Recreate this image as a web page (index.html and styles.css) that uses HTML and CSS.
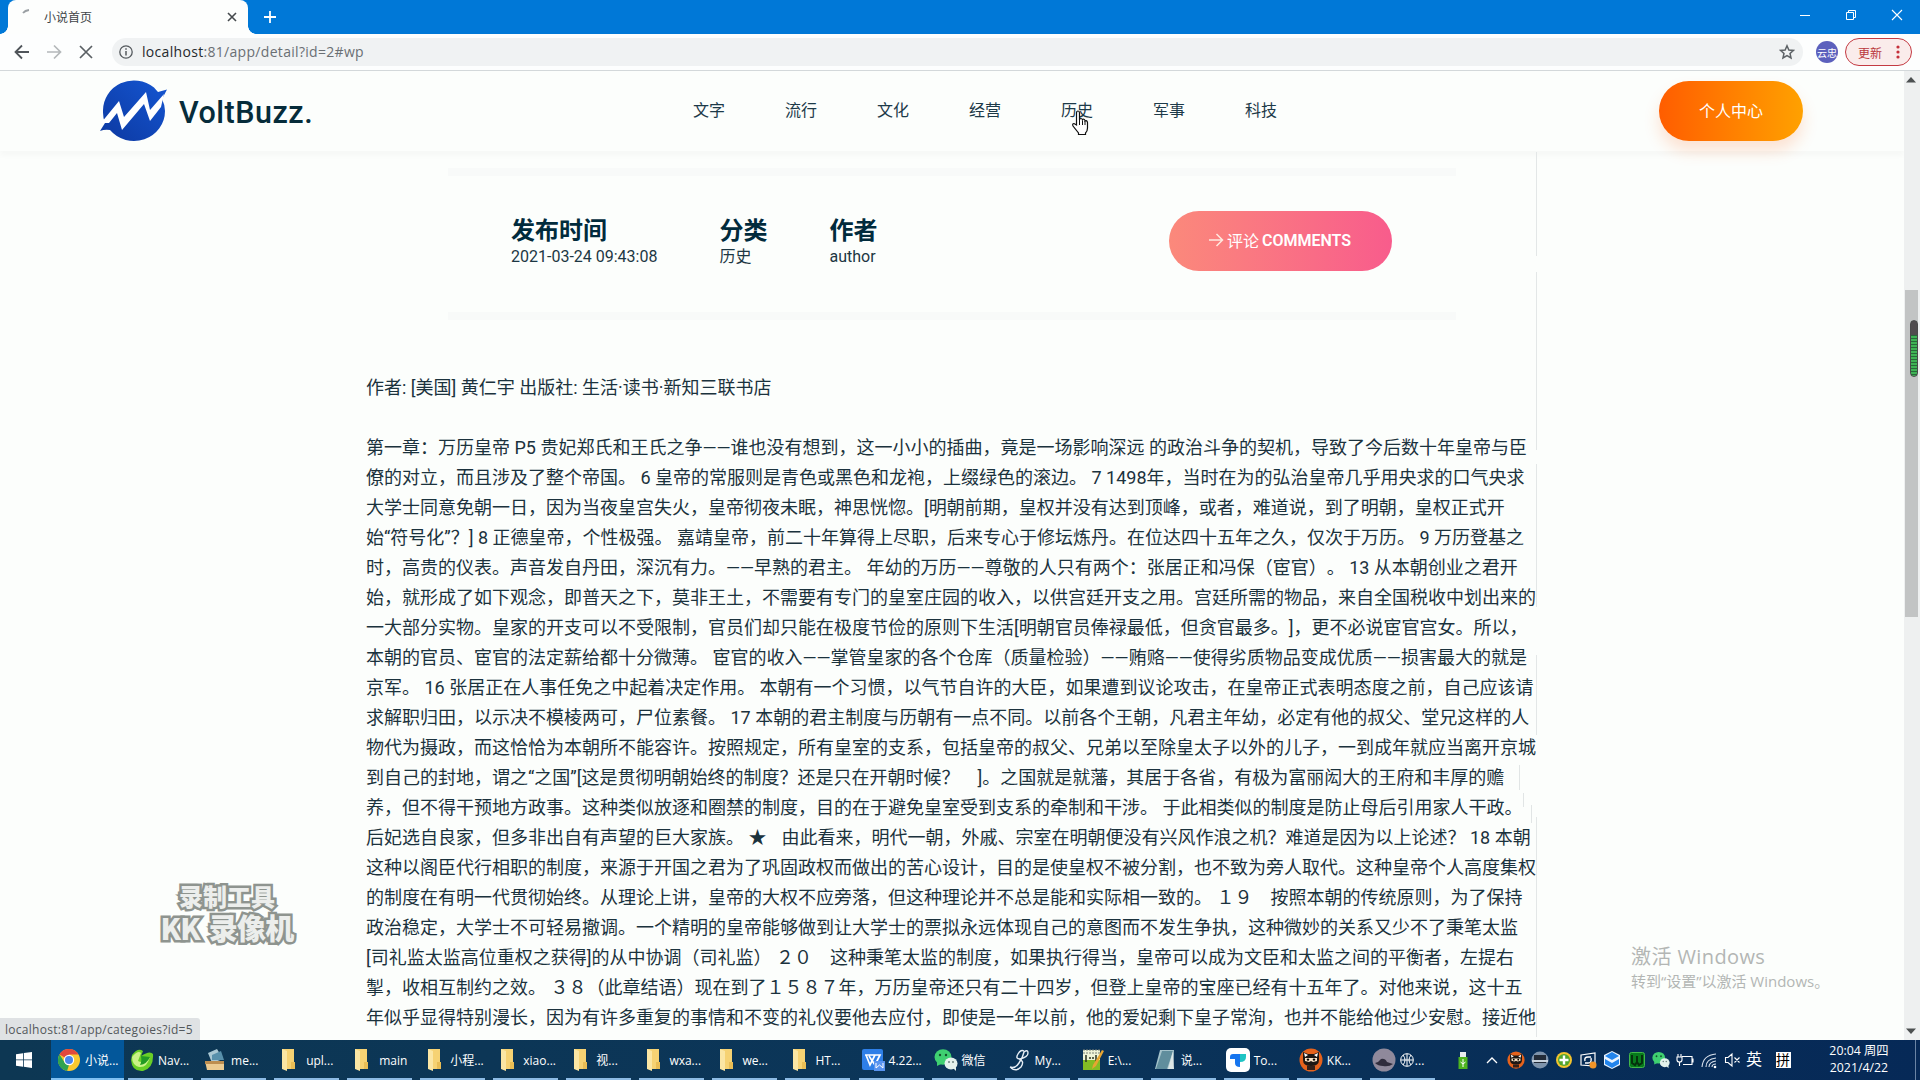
FILE: index.html
```html
<!DOCTYPE html>
<html lang="zh-CN">
<head>
<meta charset="utf-8">
<title>小说首页</title>
<link rel="stylesheet" href="styles.css">
</head>
<body>
<svg class="defs" aria-hidden="true">
  <symbol id="folder" viewBox="0 0 24 24"><path d="M6 1h12v20H6z" fill="#f6d273"/><path d="M6 1l5 2v20l-5-2z" fill="#fbe6a4"/><path d="M15 14h4v7h-4z" fill="#e9bd55"/></symbol>
  <symbol id="wechat" viewBox="0 0 24 24"><ellipse cx="9" cy="9" rx="8.5" ry="7.8" fill="#3fd071"/><path d="M3 14l0 4 4-2z" fill="#3fd071"/><circle cx="6" cy="7" r="1.2" fill="#14502c"/><circle cx="12" cy="7" r="1.2" fill="#14502c"/><ellipse cx="17" cy="15.5" rx="6.5" ry="6" fill="#e4f2ec"/><path d="M19 20l3 3 0-4z" fill="#e4f2ec"/><circle cx="15" cy="14" r="1" fill="#6f8580"/><circle cx="19" cy="14" r="1" fill="#6f8580"/></symbol>
  <symbol id="ninja" viewBox="0 0 24 24"><circle cx="12" cy="12" r="11.5" fill="#e5621c"/><path d="M4 4l5 2h6l5-2 0 8q0 6-8 6t-8-6z" fill="#1d1714"/><path d="M5 5l4 2-3 2zM19 5l-4 2 3 2z" fill="#fff"/><path d="M6 10h12v3l-4 1-2-1-2 1-4-1z" fill="#fbe3c6"/><circle cx="9" cy="11.6" r="1.2"/><circle cx="15" cy="11.6" r="1.2"/><path d="M8 18h8v4H8z" fill="#32201a"/></symbol>
</svg>

<header class="tabstrip">
  <div class="tab">
    <svg class="spinner" width="16" height="16" viewBox="0 0 16 16"><path d="M3 6Q5 3.500 9 3" fill="none" stroke="#9a9fa3" stroke-width="1.8"/></svg>
    <span class="tab-title">小说首页</span>
    <svg width="10" height="10" viewBox="0 0 10 10"><path d="M1 1l8 8M9 1L1 9" stroke="#45494d" stroke-width="1.6"/></svg>
  </div>
  <svg class="newtab" width="14" height="14" viewBox="0 0 14 14"><path d="M7 1v12M1 7h12" stroke="#fff" stroke-width="1.8"/></svg>
  <div class="wincontrols">
    <svg width="12" height="12" viewBox="0 0 12 12"><path d="M1 6.5h10" stroke="#fff"/></svg>
    <svg width="12" height="12" viewBox="0 0 12 12"><path d="M1.5 3.5h7v7h-7zM3.5 3.500v-2h7v7h-2" fill="none" stroke="#fff"/></svg>
    <svg width="12" height="12" viewBox="0 0 12 12"><path d="M1 1l10 10M11 1L1 11" stroke="#fff" stroke-width="1.1"/></svg>
  </div>
</header>

<div class="toolbar">
  <svg width="16" height="16" viewBox="0 0 16 16"><path d="M15 8H2M8 1.500L1.500 8l6.500 6.500" fill="none" stroke="#50555a" stroke-width="1.8"/></svg>
  <svg width="16" height="16" viewBox="0 0 16 16"><path d="M1 8h13M8 1.500L14.500 8 8 14.500" fill="none" stroke="#b4b8ba" stroke-width="1.7"/></svg>
  <svg width="16" height="16" viewBox="0 0 16 16"><path d="M2 2l12 12M14 2L2 14" stroke="#5b6064" stroke-width="1.7"/></svg>
  <div class="urlbar">
    <svg width="14" height="14" viewBox="0 0 14 14"><circle cx="7" cy="7" r="6.200" fill="none" stroke="#54595d" stroke-width="1.3"/><path d="M7 6v4.500M7 3.300v1.500" stroke="#54595d" stroke-width="1.500"/></svg>
    <span class="url"><b>localhost</b>:81/app/detail?id=2#wp</span>
    <svg class="star" width="16" height="16" viewBox="0 0 18 18"><path d="M9 2l2.100 4.700 5.100.5-3.800 3.400 1.100 5L9 13l-4.500 2.600 1.100-5L1.800 7.200l5.100-.5z" fill="none" stroke="#5d6266" stroke-width="1.700"/></svg>
  </div>
  <span class="avatar">云忠</span>
  <span class="update">更新<svg width="4" height="14" viewBox="0 0 4 14"><circle cx="2" cy="2" r="1.600"/><circle cx="2" cy="7" r="1.600"/><circle cx="2" cy="12" r="1.600"/></svg></span>
</div>

<div class="viewport">
  <main class="page">
    <div class="site-header">
      <div class="brand">
        <svg width="68" height="62" viewBox="0 0 68 62"><defs><linearGradient id="lg" x1="0" y1="1" x2="1" y2="0"><stop offset="0" stop-color="#0c38a0"/><stop offset="1" stop-color="#1556d2"/></linearGradient></defs>
          <path d="M0 51L5 43A31 30 0 0 1 3 31A31 30 0 0 1 54 7.500Q57 11 58 12L67 9.500 62 19Q65 25 65 31A31 30 0 0 1 10 50Q5 49 0 51z" fill="url(#lg)"/>
          <path d="M1 43L19 21 24 37 46 12 50 30 64 14 61 27 50 41 44 24 22 50 17 33 9 43z" fill="#fff"/></svg>
        <span>VoltBuzz.</span>
      </div>
      <nav class="menu"><a>文字</a><a>流行</a><a>文化</a><a>经营</a><a>历史</a><a>军事</a><a>科技</a></nav>
      <a class="profile">个人中心</a>
    </div>
    <section class="info">
      <dl><dt>发布时间</dt><dd>2021-03-24 09:43:08</dd></dl>
      <dl><dt>分类</dt><dd>历史</dd></dl>
      <dl><dt>作者</dt><dd>author</dd></dl>
      <a class="comments"><svg width="16" height="16" viewBox="0 0 16 16"><path d="M1 8h13M8.500 2l6 6-6 6" fill="none" stroke="#ffe9df" stroke-width="1.500"/></svg>评论 <b>COMMENTS</b></a>
    </section>
    <article class="story">
      <p>作者: [美国] 黄仁宇 出版社: 生活·读书·新知三联书店</p>
      <p>第一章：万历皇帝 P5 贵妃郑氏和王氏之争——谁也没有想到，这一小小的插曲，竟是一场影响深远 的政治斗争的契机，导致了今后数十年皇帝与臣<br>
僚的对立，而且涉及了整个帝国。 6 皇帝的常服则是青色或黑色和龙袍，上缀绿色的滚边。 7 1498年，当时在为的弘治皇帝几乎用央求的口气央求<br>
大学士同意免朝一日，因为当夜皇宫失火，皇帝彻夜未眠，神思恍惚。[明朝前期，皇权并没有达到顶峰，或者，难道说，到了明朝，皇权正式开<br>
始“符号化”？] 8 正德皇帝，个性极强。 嘉靖皇帝，前二十年算得上尽职，后来专心于修坛炼丹。在位达四十五年之久，仅次于万历。 9 万历登基之<br>
时，高贵的仪表。声音发自丹田，深沉有力。——早熟的君主。 年幼的万历——尊敬的人只有两个：张居正和冯保（宦官）。 13 从本朝创业之君开<br>
始，就形成了如下观念，即普天之下，莫非王土，不需要有专门的皇室庄园的收入，以供宫廷开支之用。宫廷所需的物品，来自全国税收中划出来的<br>
一大部分实物。皇家的开支可以不受限制，官员们却只能在极度节俭的原则下生活[明朝官员俸禄最低，但贪官最多。]，更不必说宦官宫女。所以，<br>
本朝的官员、宦官的法定薪给都十分微薄。 宦官的收入——掌管皇家的各个仓库（质量检验）——贿赂——使得劣质物品变成优质——损害最大的就是<br>
京军。 16 张居正在人事任免之中起着决定作用。 本朝有一个习惯，以气节自许的大臣，如果遭到议论攻击，在皇帝正式表明态度之前，自己应该请<br>
求解职归田，以示决不模棱两可，尸位素餐。 17 本朝的君主制度与历朝有一点不同。以前各个王朝，凡君主年幼，必定有他的叔父、堂兄这样的人<br>
物代为摄政，而这恰恰为本朝所不能容许。按照规定，所有皇室的支系，包括皇帝的叔父、兄弟以至除皇太子以外的儿子，一到成年就应当离开京城<br>
到自己的封地，谓之“之国”[这是贯彻明朝始终的制度？还是只在开朝时候？　]。之国就是就藩，其居于各省，有极为富丽闳大的王府和丰厚的赡<br>
养，但不得干预地方政事。这种类似放逐和圈禁的制度，目的在于避免皇室受到支系的牵制和干涉。 于此相类似的制度是防止母后引用家人干政。<br>
后妃选自良家，但多非出自有声望的巨大家族。 <span class="mark">★</span>　由此看来，明代一朝，外戚、宗室在明朝便没有兴风作浪之机？难道是因为以上论述？ 18 本朝<br>
这种以阁臣代行相职的制度，来源于开国之君为了巩固政权而做出的苦心设计，目的是使皇权不被分割，也不致为旁人取代。这种皇帝个人高度集权<br>
的制度在有明一代贯彻始终。从理论上讲，皇帝的大权不应旁落，但这种理论并不总是能和实际相一致的。 １９　按照本朝的传统原则，为了保持<br>
政治稳定，大学士不可轻易撤调。一个精明的皇帝能够做到让大学士的票拟永远体现自己的意图而不发生争执，这种微妙的关系又少不了秉笔太监<br>
[司礼监太监高位重权之获得]的从中协调（司礼监） ２０　这种秉笔太监的制度，如果执行得当，皇帝可以成为文臣和太监之间的平衡者，左提右<br>
掣，收相互制约之效。 ３８（此章结语）现在到了１５８７年，万历皇帝还只有二十四岁，但登上皇帝的宝座已经有十五年了。对他来说，这十五<br>
年似乎显得特别漫长，因为有许多重复的事情和不变的礼仪要他去应付，即使是一年以前，他的爱妃剩下皇子常洵，也并不能给他过少安慰。接近他</p>
      <p class="next">的人都可以看出，皇帝的情绪在这些年里变得越来越消沉，他对朝廷中的各种争论感到厌倦，而大臣们仍然不断地向他呈递奏章，要求他遵守祖宗</p>
    </article>
  </main>
  <aside class="scrollbar">
    <svg width="10" height="6" viewBox="0 0 10 6"><path d="M0 5.500L5 0l5 5.500z" fill="#4c5051"/></svg>
    <div class="thumb"></div>
    <svg width="10" height="6" viewBox="0 0 10 6"><path d="M0 .5L5 6 10 .5z" fill="#4c5051"/></svg>
  </aside>
  <div class="meter"></div>
  <svg class="edge" width="24" height="890" viewBox="0 0 24 890"><path d="M20.500 1v104M20.500 121v178M20.500 313v143M20.500 504v80M20.500 666v220" stroke="#e3e7e7"/><path d="M3.500 614v25M7.500 642v14M15.500 654v18" stroke="#e1e5e5"/></svg>
  <div class="recorder"><span>录制工具</span><span>KK 录像机</span></div>
  <div class="activate"><span>激活 Windows</span><small>转到“设置”以激活 Windows。</small></div>
  <div class="status">localhost:81/app/categoies?id=5</div>
  <svg class="cursor" width="18" height="26" viewBox="0 0 18 26"><path d="M5.500 15V3Q5.500 1 7 1T8.500 3v7Q8.500 8.500 10 8.500T11.500 10.500V9.500Q13 8.500 14 10.500V11Q16 10 16.500 12.500V18Q16.500 21 14.500 23V24.500H7.500V23L2 16Q1 13.500 3 13.500z" fill="#fff" stroke="#111" stroke-width="1.200"/><path d="M8.500 10v5M11.500 10.500v4.500M14 11v4" stroke="#111"/></svg>
</div>

<footer class="taskbar">
  <svg class="start" width="16" height="16" viewBox="0 0 16 16"><path d="M0 2.300L7 1.200v6.300H0zM7.800 1.100L16 0v7.500H7.800zM0 8.300h7v6.400L0 13.700zM7.800 8.300H16V16l-8.200-1.200z" fill="#fff"/></svg>
  <div class="apps">
    <a class="app active"><svg viewBox="0 0 24 24"><circle cx="12" cy="12" r="11" fill="#fbc92f"/><path d="M12 12L2.500 6.500A11 11 0 0 1 21.600 6.600H12z" fill="#e2483d"/><path d="M2.500 6.500L8 15l4 2-2 6A11 11 0 0 1 2.500 6.500z" fill="#2fa351"/><circle cx="12" cy="12" r="5.200" fill="#fff"/><circle cx="12" cy="12" r="4" fill="#4a86ec"/></svg>小说...</a>
    <a class="app"><svg viewBox="0 0 24 24"><path d="M2 7Q8-1 13 3L11 8Q20 2 23 6 24 20 13 23 2 24 1 12z" fill="#69cf27"/><path d="M2 9Q8 2 11 5L8 13Q14 16 20 9 17 20 9 19 2 17 2 9z" fill="#c9f386"/><path d="M11 8q1 6-1 9 7-1 10-8z" fill="#219a24"/></svg>Nav...</a>
    <a class="app"><svg viewBox="0 0 24 24"><path d="M5 5l9-4 6 10-11 4z" fill="#a9c7d3"/><path d="M9 7l9-4 3 9H9z" fill="#5890ab"/><path d="M2 13h19v9H4z" fill="#eccb91"/><path d="M2 13h19v3H2z" fill="#bd8e50"/></svg>me...</a>
    <a class="app"><svg><use href="#folder"/></svg><span>upl...</span></a>
    <a class="app"><svg><use href="#folder"/></svg><span>main</span></a>
    <a class="app"><svg><use href="#folder"/></svg>小程...</a>
    <a class="app"><svg><use href="#folder"/></svg>xiao...</a>
    <a class="app"><svg><use href="#folder"/></svg>视...</a>
    <a class="app"><svg><use href="#folder"/></svg>wxa...</a>
    <a class="app"><svg><use href="#folder"/></svg>we...</a>
    <a class="app"><svg><use href="#folder"/></svg>HT...</a>
    <a class="app"><svg viewBox="0 0 24 24"><rect x="1" y="1" width="21" height="21" rx="2" fill="#2e7fe8"/><path d="M4 7h15L14 17 8 8M5 7l4 10 5-10" fill="none" stroke="#fff" stroke-width="1.700"/><path d="M13 13h11v10H13z" fill="#5893ef"/><path d="M15 15v5l3.500-3 3.500 3v-5" fill="none" stroke="#fff"/></svg>4.22...</a>
    <a class="app"><svg><use href="#wechat"/></svg>微信</a>
    <a class="app"><svg viewBox="0 0 24 24"><path d="M3 19Q8 21 12 15T17 4Q21 1 21 5T13 11Q8 11 11 6 14 1 17 3M12 11Q18 13 14 19 9 24 4 20" fill="none" stroke="#e5edf5" stroke-width="1.400"/></svg>My...</a>
    <a class="app"><svg viewBox="0 0 24 24"><path d="M3 2h17v20H3z" fill="#eef3d7"/><path d="M3 12h17v10H3z" fill="#83bd24"/><path d="M3 2h17M3 5h17" stroke="#7a8178" stroke-dasharray="2 1"/><path d="M6 7v7M9 10h2M12 10h2M16 7v7" stroke="#2a3321" stroke-width="1.500"/><path d="M22 2l-9 15-1 4 4-3L24 3z" fill="#e6a531"/></svg>E:\...</a>
    <a class="app"><svg viewBox="0 0 24 24"><path d="M7 2h14l-1 19H2z" fill="#a4c3cb"/><path d="M9 3h11l-6 18H3z" fill="#608e9d"/><path d="M20 3l1 18-6 0z" fill="#dce6e6"/></svg>说...</a>
    <a class="app"><svg viewBox="0 0 24 24"><rect width="24" height="24" rx="5" fill="#fff"/><path d="M4 9q0-3 3-3h7v5H4zM9 11h5v8q-5 0-5-4z" fill="#1675ef"/><path d="M14 6h6v3q0 5-6 5z" fill="#1fc4c4"/></svg>To...</a>
    <a class="app"><svg><use href="#ninja"/></svg>KK...</a>
    <a class="app"><svg viewBox="0 0 24 24"><circle cx="12" cy="12" r="11.500" fill="#8f899b"/><path d="M3 15q4-1 6-4 4-1 6 3l6 2q-4 3-10 2-5 0-8-3z" fill="#302d3d"/></svg><svg class="ball" viewBox="0 0 14 14"><path d="M7 .7A6.300 6.300 0 1 0 7 13.300 6.300 6.300 0 0 0 7 .7M7 1v12M1 7h12M3 2q4 5 0 10M11 2q-4 5 0 10" fill="none" stroke="#fff"/></svg>...</a>
  </div>
  <div class="tray">
    <svg viewBox="0 0 18 18"><path d="M6 1h6v5H6z" fill="#e7ecef"/><path d="M4.500 6h9v12h-9z" fill="#4db51f"/><path d="M9 8v8M6.500 11l2.500 2 2.500-2" fill="none" stroke="#fff"/></svg>
    <svg class="chev" viewBox="0 0 18 18"><path d="M4 12l5-5 5 5" fill="none" stroke="#fff" stroke-width="1.300"/></svg>
    <svg><use href="#ninja"/></svg>
    <svg viewBox="0 0 18 18"><circle cx="9" cy="9" r="8.500" fill="#7d93ac"/><path d="M3 4h12v8H3z" fill="#222b38"/><path d="M1 9h16v2H1z" fill="#c9d3de"/></svg>
    <svg viewBox="0 0 18 18"><circle cx="9" cy="9" r="8" fill="#f3c42e"/><circle cx="9" cy="9" r="6" fill="#53a42c"/><path d="M9 4.500v9M4.500 9h9" stroke="#fff" stroke-width="2.400"/></svg>
    <svg viewBox="0 0 18 18"><path d="M2 4l14-2v13l-14-1z" fill="none" stroke="#fff" stroke-width="1.200"/><path d="M6 10q-1-4 3-4h3M12 7q1 5-3 5H6" fill="none" stroke="#fff" stroke-width="1.400"/><circle cx="14" cy="14" r="3.500" fill="#f19428"/></svg>
    <svg viewBox="0 0 18 18"><path d="M9 0l8 4v10l-8 4-8-4V4z" fill="#eaf4ff"/><path d="M9 1l7 4-7 4-7-4zM2 8l7 4 7-4v5l-7 4-7-4z" fill="#2284ec"/></svg>
    <svg viewBox="0 0 18 18"><rect x="1.500" y="1.500" width="15" height="15" rx="2" fill="#087a1c" stroke="#43b64a"/><path d="M4 4v8l3 2 2-3 2 3 3-2V4M9 5v6" fill="none" stroke="#05300c" stroke-width="2"/></svg>
    <svg><use href="#wechat"/></svg>
    <svg viewBox="0 0 18 18"><path d="M6 5.500h10v8H7M16 8h1v3h-1M1 6h5v3q0 2-2.500 2T1 9zM2 6V3M5 6V3M3.500 11v4" fill="none" stroke="#fff" stroke-width="1.100"/></svg>
    <svg viewBox="0 0 18 18"><path d="M2 16Q3 4 16 3M6 16Q6 8 16 7M9 16Q9 11 16 10M12 16q0-3 4-3" fill="none" stroke="#d8e1ec" stroke-width="1.100"/><circle cx="15" cy="16" r="1.300" fill="#fff"/></svg>
    <svg viewBox="0 0 18 18"><path d="M1.500 6.500h2.500L8 3v12l-4-3.500H1.500zM10.500 6.500l5 5M15.500 6.500l-5 5" fill="none" stroke="#fff" stroke-width="1.100"/></svg>
  </div>
  <span class="lang">英</span><span class="ime">拼</span>
  <div class="clock">20:04 周四<br>2021/4/22</div>
  <div class="peek"></div>
</footer>
</body>
</html>
```
FILE: styles.css
```css
* { box-sizing: border-box; }
body {
  margin: 0; width: 1920px; height: 1080px; overflow: hidden;
  display: flex; flex-direction: column;
  background: #fcfefc; color: #0b2532;
  font-family: Roboto, "Noto Sans CJK SC", sans-serif;
  text-spacing-trim: space-all;
}
svg { flex: none; display: block; }
.defs { position: absolute; width: 0; height: 0; }

/* browser window */
.tabstrip { height: 34px; background: #0078d7; display: flex; align-items: center; padding-left: 8px; flex: none; }
.tab {
  width: 240px; height: 34px; background: #fdfefd; border-radius: 8px 8px 0 0; position: relative;
  display: flex; align-items: center; padding: 0 11px 0 12px;
}
.tab::before, .tab::after { content: ""; position: absolute; bottom: 0; width: 8px; height: 8px; }
.tab::before { left: -8px; background: radial-gradient(circle at 0 0, #0078d7 7.500px, #fdfefd 8px); }
.tab::after { right: -8px; background: radial-gradient(circle at 100% 0, #0078d7 7.500px, #fdfefd 8px); }
.spinner { margin: -5px 8px 0 0; }
.tab-title { flex: 1; font-size: 12px; line-height: 16px; margin-top: 1px; color: #404448; }
.newtab { margin-left: 15px; }
.wincontrols { margin-left: auto; margin-right: 17px; display: flex; gap: 34px; padding-bottom: 5px; }
.toolbar {
  height: 37px; flex: none; background: #fdfefe; border-bottom: 1px solid #d3d8da;
  display: flex; align-items: center; padding: 0 8px 0 14px; gap: 16px;
}
.urlbar {
  flex: 1; height: 28px; margin-left: 2px; margin-right: -3px; border-radius: 14px; background: #f0f2f3;
  display: flex; align-items: center; padding: 0 8px 0 7px;
}
.urlbar > svg:first-child { margin-right: 9px; }
.url { font: 14px/18px "Open Sans", "Noto Sans", sans-serif; letter-spacing: .31px; color: #6a6f73; }
.url b { font-weight: 400; color: #25292c; }
.star { margin-left: auto; }
.avatar {
  width: 22px; height: 22px; border-radius: 50%; background: #5c60bd; color: #fff; margin-right: -9px;
  font-size: 10px; display: grid; place-items: center; white-space: nowrap;
}
.update {
  width: 67px; height: 28px; border: 1px solid #c43a42; border-radius: 14px; background: #faeceb;
  color: #b9363b; font-size: 12px; display: flex; align-items: center; justify-content: space-between; padding: 0 11px 0 12px;
}
.update svg { fill: #c5303a; }

/* web page */
.viewport { height: 969px; flex: none; position: relative; display: flex; overflow: hidden; }
.page { width: 1904px; }
.site-header {
  height: 80px; display: flex; align-items: center; padding: 0 101px 0 100px;
  box-shadow: 0 5px 5px rgba(20, 40, 40, .025);
}
.brand { display: flex; align-items: center; gap: 11px; width: 593px; font-size: 30.500px; font-weight: 500; color: #062c3a; }
.brand span { padding-top: 3px; letter-spacing: .5px; }
.menu { display: flex; gap: 60px; font-size: 16px; line-height: 24px; color: #1d3a49; margin-top: -1px; }
.profile {
  margin-left: auto; width: 144px; height: 60px; border-radius: 30px; color: #fff; font-size: 16px; padding-bottom: 2px;
  display: grid; place-items: center; background: linear-gradient(90deg, #ff5d00, #ffa100);
  box-shadow: 0 10px 16px rgba(255, 100, 20, .18);
}
.info {
  margin: 17px 448px 0; height: 152px; display: flex; align-items: flex-start; padding: 35px 64px 0 63px;
  border-top: 8px solid #f8faf9; border-bottom: 8px solid #f8faf9;
}
.info dl { margin: 6px 62px 0 0; }
.info dt { font-size: 24px; line-height: 28px; font-weight: 700; color: #012b3c; }
.info dd { margin: 0; font-size: 16px; line-height: 24px; color: #1c3743; }
.comments {
  margin: 0 0 0 auto; width: 223px; height: 60px; border-radius: 30px; color: #fff; font-size: 16px;
  display: flex; align-items: center; justify-content: center; gap: 3px; padding-bottom: 2px;
  background: linear-gradient(90deg, #fb897b, #f85c8c);
}
.comments b { font-weight: 600; }
.comments svg { margin-left: -2px; }
.story { padding: 53px 0 0 366px; font-size: 18px; line-height: 30px; white-space: nowrap; color: #1b323d; }
.story p { margin: 0 0 30px; }
.story .next { margin-top: -28px; }
.mark { letter-spacing: -3px; }
.scrollbar { width: 16px; background: #eef0f0; display: flex; flex-direction: column; align-items: center; padding: 6px 2px 6px 0; }
.thumb { width: 13px; height: 327px; margin: 207px 0 auto; background: #c2c4c4; }

/* overlays */
.meter {
  position: absolute; left: 1910px; top: 249px; width: 8px; height: 57px; border-radius: 4px; border: 1px solid #4a4a4a;
  background: linear-gradient(#504c4e 14px, transparent 14px), repeating-linear-gradient(#3fb355 0 2px, #276a39 2px 3px);
}
.edge { position: absolute; left: 1516px; top: 80px; }
.recorder {
  position: absolute; left: 157px; top: 809px; width: 140px; display: flex; flex-direction: column; align-items: center;
  font: 900 24px/32px "Noto Sans CJK SC", sans-serif; color: #eceeec; -webkit-text-stroke: 5px #8e948f; paint-order: stroke fill; white-space: nowrap;
}
.recorder span + span { font-size: 29px; line-height: 30px; letter-spacing: -.8px; word-spacing: 3px; }
.activate {
  position: absolute; left: 1631px; top: 871px; display: flex; flex-direction: column; color: #b3b6b4;
  font: 20px/30px "Open Sans", "Noto Sans CJK SC", sans-serif; letter-spacing: .4px; white-space: nowrap;
}
.activate small { font-size: 15px; line-height: 18px; letter-spacing: 0; }
.status {
  position: absolute; left: 0; bottom: -1px; width: 200px; height: 23px; background: #dfe2e4; color: #53585b;
  font: 12px/23px "Open Sans", sans-serif; letter-spacing: .28px; padding-left: 5px; border-radius: 0 3px 0 0;
}
.cursor { position: absolute; left: 1071px; top: 39px; }

/* taskbar */
.taskbar {
  height: 40px; flex: none; display: flex; align-items: center; color: #fff; position: relative;
  background: linear-gradient(90deg, #0d3753, #0b3559 50%, #062957); font: 12px "Open Sans", "Noto Sans CJK SC", sans-serif;
}
.start { margin: 0 19px 0 16px; }
.apps { display: flex; height: 40px; }
.app {
  width: 73.060px; height: 40px; padding-left: 6px; display: flex; align-items: center; gap: 4px; white-space: nowrap;
  background: linear-gradient(#8dbbe4, #8dbbe4) 4px 38px / 65px 2px no-repeat;
}
.app.active { background: linear-gradient(#7fc0f2, #7fc0f2) 0 38px / 73px 2px no-repeat #03579a; }
.app svg { width: 24px; height: 24px; }
.app svg.ball { width: 14px; height: 14px; margin-right: -3px; }
.app span { padding-left: 2px; }
.tray { margin-left: 15px; display: flex; gap: 6.100px; }
.tray svg { width: 18px; height: 18px; }
.tray .chev { margin-left: 5px; }
.lang { margin-left: 4px; font-size: 16px; line-height: 20px; margin-top: -2px; }
.ime { margin-left: 14px; width: 15px; height: 16px; background: #fff; color: #000; font-size: 14px; line-height: 15px; }
.clock { margin-left: 31px; width: 74px; text-align: center; line-height: 17px; font-size: 12.300px; margin-top: -2px; }
.peek { margin-left: auto; width: 5px; height: 40px; border-left: 1px solid #6a84a5; }
```
